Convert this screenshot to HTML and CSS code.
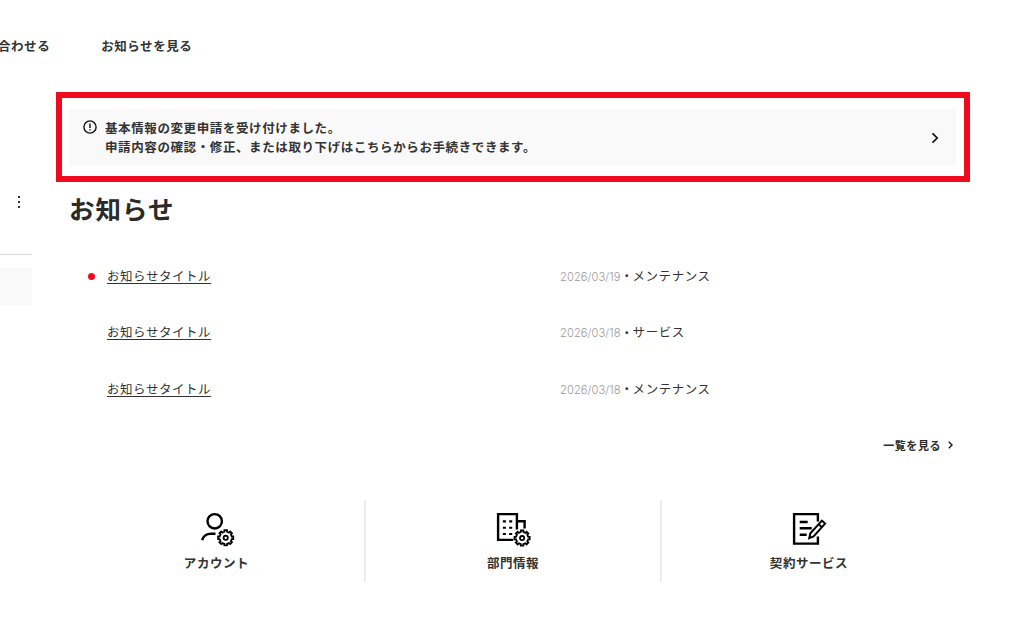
FILE: index.html
```html
<!DOCTYPE html>
<html lang="ja">
<head>
<meta charset="utf-8">
<title>お知らせ</title>
<link rel="stylesheet" href="styles.css">
</head>
<body>
	<svg class="defs" width="0" height="0">
		<symbol id="gear" viewBox="-9 -9 18 18">
			<path d="M-1.3-7.6H1.3V-6.1L3.4-5.2 4.5-6.3 6.3-4.5 5.2-3.4 6.1-1.3H7.6V1.3H6.1L5.2 3.4 6.3 4.5 4.5 6.3 3.4 5.2 1.3 6.1V7.6H-1.3V6.1L-3.4 5.2-4.5 6.3-6.3 4.5-5.2 3.4-6.1 1.3H-7.6V-1.3H-6.1L-5.2-3.4-6.3-4.5-4.5-6.3-3.4-5.2-1.3-6.1Z"/>
			<circle r="2.1"/>
		</symbol>
	</svg>
	<!-- ヘッダー -->
	<header class="header">
		<a class="nav-link">合わせる</a>
		<a class="nav-link">お知らせを見る</a>
	</header>
	<div class="wrap">
		<!-- サイドバー -->
		<aside class="side">
			<div class="side-more"><i></i><i></i><i></i></div>
			<div class="side-current"></div>
		</aside>
		<main class="main">
			<div class="frame">
				<a class="notice">
					<svg class="notice-icon" width="14" height="14" viewBox="0 0 14 14">
						<circle cx="7" cy="7" r="6.1"/>
						<path d="M7 3.4V8M7 9.2v1.4"/>
					</svg>
					<p class="notice-text">基本情報の変更申請を受け付けました。<br>申請内容の確認・修正、または取り下げはこちらからお手続きできます。</p>
					<svg class="arrow" width="8" height="12" viewBox="0 0 8 12"><path d="M1.5 1.3L6.2 6 1.5 10.7"/></svg>
				</a>
			</div>
			<h1 class="title">お知らせ</h1>
			<ul class="news">
				<li class="news-item unread">
					<a class="news-title">お知らせタイトル</a>
					<span class="news-date">2026/03/19</span><span class="dot">・</span><span class="news-cat">メンテナンス</span>
				</li>
				<li class="news-item">
					<a class="news-title">お知らせタイトル</a>
					<span class="news-date">2026/03/18</span><span class="dot">・</span><span class="news-cat">サービス</span>
				</li>
				<li class="news-item">
					<a class="news-title">お知らせタイトル</a>
					<span class="news-date">2026/03/18</span><span class="dot">・</span><span class="news-cat">メンテナンス</span>
				</li>
			</ul>
			<a class="more">一覧を見る
				<svg class="arrow" width="5" height="8" viewBox="0 0 5 8"><path d="M.8.8L4 4 .8 7.2"/></svg>
			</a>
			<!-- メニュー -->
			<nav class="menu">
				<a class="menu-item">
					<svg class="menu-icon" width="36" height="36" viewBox="0 0 36 36">
						<circle cx="15.7" cy="10.3" r="7.2"/>
						<path d="M3.2 29.3C3.9 25.2 7.6 22.7 12 22.7h4.5"/>
						<use href="#gear" x="17.7" y="17.8" width="18" height="18"/>
					</svg>
					アカウント
				</a>
				<a class="menu-item">
					<svg class="menu-icon" width="36" height="36" viewBox="0 0 36 36">
						<path d="M18.2 28.9H3.1V3.1H21.9V18.5M21.9 10.2h7.7v7.2"/>
						<path class="windows" d="M7.9 10.4h3M14.2 10.4h3M7.9 16.7h3M14.2 16.7h3M7.9 23h3M14.2 23h3"/>
						<use href="#gear" x="18.1" y="18.1" width="18" height="18"/>
					</svg>
					部門情報
				</a>
				<a class="menu-item">
					<svg class="menu-icon" width="36" height="36" viewBox="0 0 36 36">
						<path d="M26.9 10.5V3.1H3.1V32.6H26.9V25.5M8.7 11h8M8.7 17.3h12M8.7 23.7h7"/>
						<path class="pencil" d="M18.2 27.2l1.2-4.9L30.9 9.6l3.2 3-11.5 12.8ZM27.7 13.2l3.2 3"/>
					</svg>
					契約サービス
				</a>
			</nav>
		</main>
	</div>
</body>
</html>
```
FILE: styles.css
```css
*{padding: 0;margin: 0;box-sizing: border-box}
body{
	height: 642px;
	overflow: hidden;
	background: #fff;
	color: #222;
	font-family: "Noto Sans CJK JP", sans-serif;
	font-size: 12.5px;
	letter-spacing: 0.55px;
}
svg{
	display: block;
	flex: none;
	fill: none;
	stroke: #111;
}
.defs{position: absolute}
.header{
	display: flex;
	gap: 51px;
	height: 92px;
	margin-left: -2px;
	line-height: 91px;
	font-weight: 700;
	color: #333;
}
.wrap{
	display: flex;
}
.side{
	width: 32px;
	padding-top: 104px;
}
.side-more{
	display: flex;
	flex-direction: column;
	gap: 3px;
	height: 59px;
	padding-left: 18px;
	border-bottom: 1px solid #ddd;
}
.side-more i{
	width: 2px;
	height: 2px;
	background: #333;
}
.side-current{
	height: 37px;
	margin-top: 13px;
	background: #f9f9f9;
}
.main{
	width: 914px;
	margin-left: 24px;
}
.frame{
	height: 90px;
	padding: 11px 8px 10px 7px;
	border: 6px solid #ef0a1e;
}
.notice{
	display: flex;
	align-items: center;
	height: 57px;
	padding: 0 17px 0 14px;
	background: #f9f9f9;
}
.notice-icon{
	align-self: flex-start;
	margin-top: 11px;
	stroke-width: 1.4;
}
.notice-text{
	flex: 1;
	margin-left: 8px;
	padding-bottom: 2px;
	line-height: 19px;
	font-weight: 700;
	letter-spacing: 0.6px;
	color: #333;
}
.arrow{
	stroke-width: 1.7;
}
.title{
	margin: 7px 0 0 13px;
	line-height: 38px;
	font-size: 25.5px;
	font-weight: 700;
	letter-spacing: 1px;
	color: #2a2a2a;
}
.news{
	margin: 21px 0 0 13px;
	list-style: none;
}
.news-item{
	display: grid;
	grid-template-columns: 22px 469px auto auto 1fr;
	align-items: center;
	height: 56.5px;
	color: #333;
}
.news-item:before{
	content: "";
	width: 7px;
	height: 7px;
	margin-left: 19px;
	border-radius: 50%;
}
.unread:before{
	background: #ef0a1e;
}
.news-title{
	justify-self: start;
	margin: 0 0 2px 16px;
	text-decoration: underline;
	text-underline-offset: 2px;
}
.news-date{
	padding-top: 1px;
	font-family: Inter, sans-serif;
	font-size: 11.2px;
	font-weight: 300;
	letter-spacing: 0.05px;
	color: #999;
}
.dot{
	width: 12px;
	margin-bottom: 1px;
}
.news-cat{
	margin-bottom: 2px;
}
.more{
	display: flex;
	align-items: center;
	justify-content: flex-end;
	gap: 7px;
	height: 20px;
	margin: 17px 17px 0 0;
	font-size: 11px;
	font-weight: 700;
	color: #2a2a2a;
}
.more .arrow{
	stroke-width: 1.3;
}
.menu{
	display: grid;
	grid-template-columns: repeat(3, 296px);
	margin: 45.5px 0 0 12px;
}
.menu-item{
	display: flex;
	flex-direction: column;
	align-items: center;
	height: 82px;
	padding-top: 11px;
	line-height: 32px;
	font-weight: 700;
	color: #333;
}
.menu-item:first-child{
	padding-left: 1px;
}
.menu-item + .menu-item{
	border-left: 2px solid #ededed;
}
.menu-icon{
	stroke: #000;
	stroke-width: 2.4;
}
.menu-icon use{
	stroke-width: 1.8;
}
.menu-icon .windows{
	stroke-width: 2.1;
}
.menu-icon .pencil{
	stroke-width: 2;
}
```
